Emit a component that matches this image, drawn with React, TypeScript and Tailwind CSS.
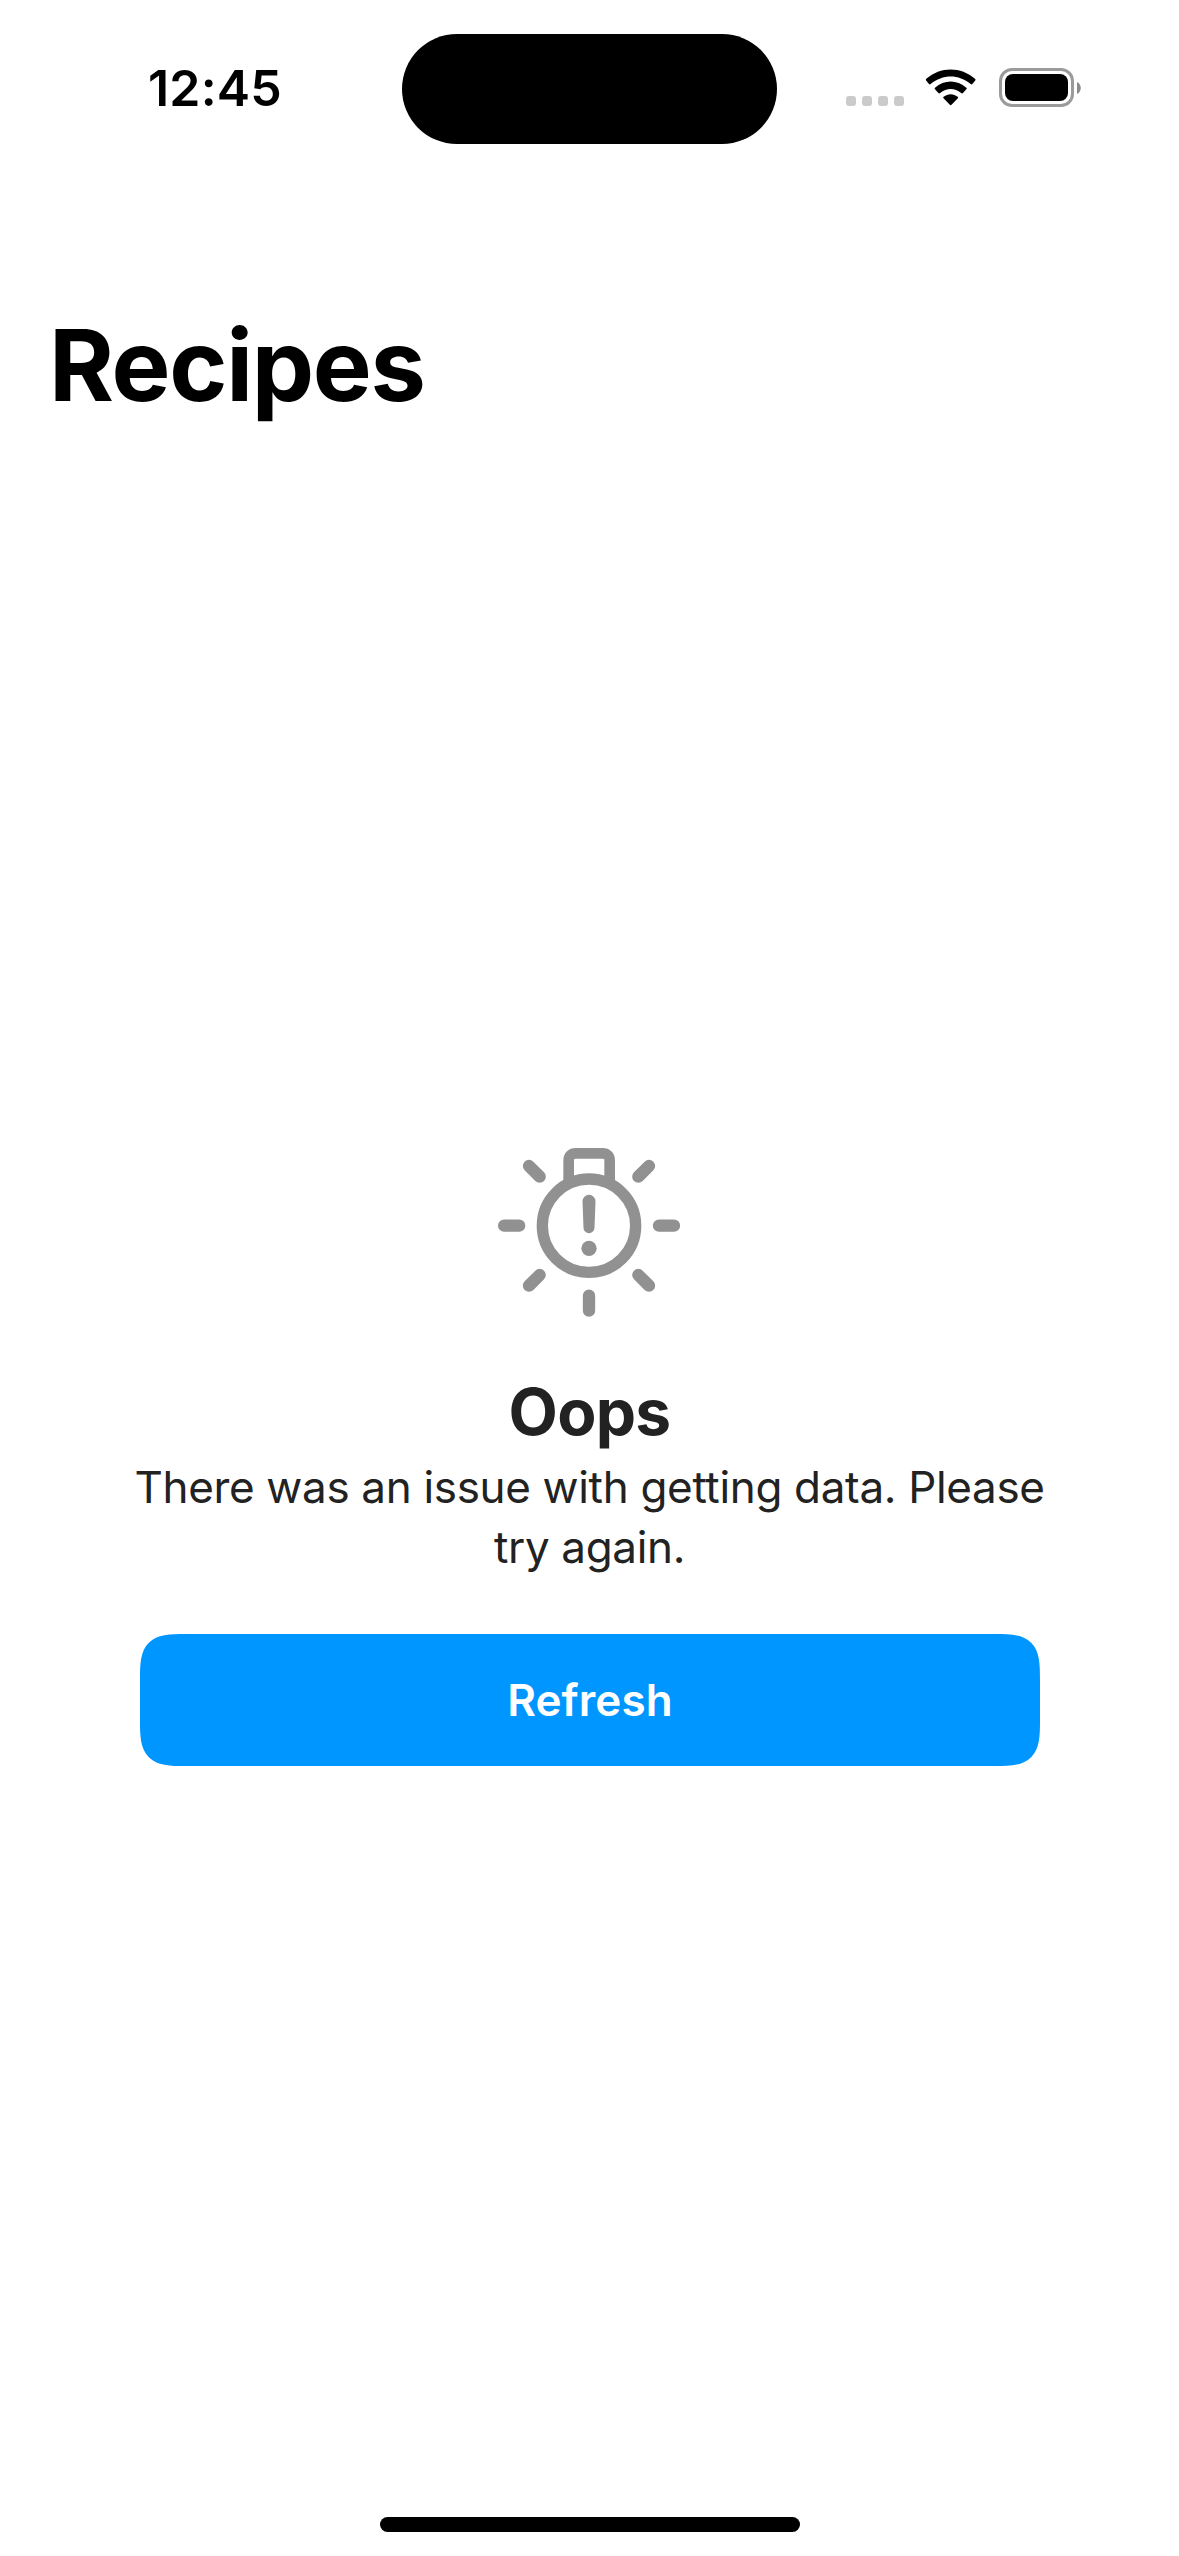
function WifiIcon() {
  return (
    <svg width="52" height="38" viewBox="0 0 156 114" className="ml-[21px] mt-px block" fill="#000">
      <path d="M4 35 Q1 32 4 29.500 C46 -8 108 -8 150 29.500 Q153 32 150 35 L142 45 Q139.500 47.500 137 45 C101 15 53 15 17 45 Q14.500 47.500 12 45 Z" />
      <path d="M30 61 Q27 58.500 30 56 C58 31 96 31 124 56 Q127 58.500 124 61 L114 72 Q111.500 74.500 108.500 72 C89 56 65 56 45.500 72 Q42.500 74.500 40 72 Z" />
      <path d="M55.500 88 Q53 85.500 56 83 C69 73 85 73 98 83 Q101 85.500 98.500 88 L79.500 107.500 Q77 110 74.500 107.500 Z" />
    </svg>
  );
}

function BatteryIcon() {
  return (
    <div className="ml-[22px] flex items-center">
      <div className="h-[39px] w-[75px] rounded-[13px] border-[3px] border-[#9b9b9b] p-[3px]">
        <div className="h-full w-full rounded-[8px] bg-black" />
      </div>
      <svg width="4" height="12" viewBox="0 0 4 12" className="ml-[3px]">
        <path d="M0 0 C5 2 5 10 0 12 Z" fill="#8c8c8c" />
      </svg>
    </div>
  );
}

function StatusBar() {
  return (
    <header className="relative flex h-[177px] items-start justify-between pl-[148px] pr-[98px]">
      <div className="mt-[58px] text-[50px] font-[580] leading-[60px] tracking-[0.2px]">12:45</div>
      <div className="absolute left-[401.500px] top-[33.500px] h-[110.500px] w-[375.500px] rounded-full bg-black" />
      <div className="mt-[68px] flex h-[39px] items-center">
        <div className="mt-[27px] flex gap-[6px]">
          {[0, 1, 2, 3].map((dot) => (
            <span key={dot} className="size-[10px] rounded-[3px] bg-[#cbcbcb]" />
          ))}
        </div>
        <WifiIcon />
        <BatteryIcon />
      </div>
    </header>
  );
}

function WarningLightIcon() {
  return (
    <svg width="220" height="200" viewBox="0 0 660 600" fill="none" stroke="#919191" strokeLinecap="round" className="block">
      <circle cx="327" cy="287" r="140" strokeWidth="34" />
      <path d="M266 150 V92 Q266 70 288 70 H367 Q389 70 389 92 V150" strokeWidth="32" strokeLinecap="butt" />
      <g strokeWidth="37">
        <path d="M72.500 287 H117.500 M537 287 H582 M327 497 V542" />
        <path d="M147 108 L179 140 M507 108 L475 140 M179 435 L147 467 M475 435 L507 467" />
      </g>
      <g fill="#919191" stroke="none">
        <path d="M307.500 214 A19.500 19.500 0 0 1 346.500 214 L343.500 293 A16.500 16.500 0 0 1 310.500 293 Z" />
        <circle cx="327" cy="355" r="23" />
      </g>
    </svg>
  );
}

export default function App() {
  return (
    <div className="flex h-[2556px] w-[1179px] flex-col bg-white font-['Inter',sans-serif] text-black">
      <StatusBar />
      <h1 className="ml-[49px] mt-[128px] text-[99px] font-bold leading-[120px] tracking-[-1.300px]">Recipes</h1>
      <main className="mt-[705px] flex flex-col items-center text-[#222222]">
        <div className="flex w-full justify-start pl-[480px]">
          <WarningLightIcon />
        </div>
        <h2 className="mt-[42px] text-[64px] font-bold leading-[80px] tracking-[-0.700px]">Oops</h2>
        <p className="mt-[5px] whitespace-nowrap text-center text-[44px] leading-[60px] tracking-[-0.330px]">
          There was an issue with getting data. Please
          <br />
          try again.
        </p>
        <button className="ml-px mt-[57px] flex h-[132px] w-[900px] items-center justify-center rounded-[33px] bg-[#0096ff] text-[44px] font-[580] leading-[60px] tracking-[0.100px] text-white supports-[corner-shape:squircle]:rounded-[46px] supports-[corner-shape:squircle]:[corner-shape:superellipse(1.7)]">
          Refresh
        </button>
      </main>
      <div className="mb-[24px] mt-auto h-[15px] w-[420px] self-center rounded-full bg-black" />
    </div>
  );
}
